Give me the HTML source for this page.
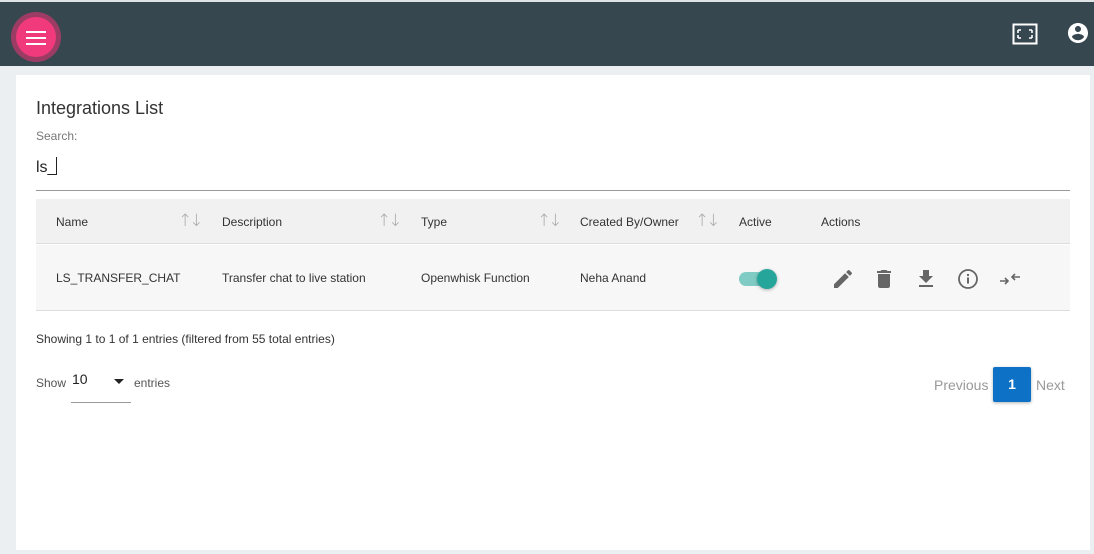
<!DOCTYPE html>
<html><head><style>
*{margin:0;padding:0;box-sizing:border-box}
body{width:1094px;height:554px;background:#eceff1;font-family:"Liberation Sans",sans-serif;position:relative;overflow:hidden;color:#333}
.top{position:absolute;left:0;top:0;width:1094px;height:2px;background:#dfe3e6}
.hdr{position:absolute;left:0;top:2px;width:1094px;height:64px;background:#37474f}
.fab{position:absolute;left:11px;top:10px;width:50px;height:50px;border-radius:50%;background:#9c3c64}
.fab i{position:absolute;left:5px;top:5px;width:40px;height:40px;border-radius:50%;background:#f03a7c}
.fab b{position:absolute;left:15px;width:20px;height:2px;background:#fff}
.card{position:absolute;left:16px;top:75px;width:1074px;height:475px;background:#fff}
.abs{position:absolute;white-space:nowrap}
.th{position:absolute;left:20px;top:124px;width:1034px;height:45px;background:#f1f1f1;border-bottom:1px solid #ddd}
.tr{position:absolute;left:20px;top:170px;width:1034px;height:66px;background:#f7f7f7;border-bottom:1px solid #ddd}
.t{position:absolute;font-size:12px;color:#333}
.s{position:absolute;font-size:17px;color:#aaa;letter-spacing:-3px;font-family:"DejaVu Sans",sans-serif;font-weight:200}
</style></head><body>
<div class="top"></div>
<div class="hdr">
<div class="fab"><i></i><b style="top:19px"></b><b style="top:25px"></b><b style="top:31px"></b></div>
<svg style="position:absolute;left:1012px;top:21px" width="26" height="22" viewBox="0 0 26 22"><rect x="1.5" y="1.5" width="23" height="19" fill="none" stroke="#fff" stroke-width="2"/><path d="M6 7h3M6 7v3M20 7h-3M20 7v3M6 15h3M6 15v-3M20 15h-3M20 15v-3" stroke="#fff" stroke-width="1.6"/></svg>
<svg style="position:absolute;left:1066px;top:19px" width="24" height="24" viewBox="0 0 24 24"><path fill="#fff" d="M12 2C6.48 2 2 6.48 2 12s4.48 10 10 10 10-4.48 10-10S17.52 2 12 2zm0 3c1.66 0 3 1.34 3 3s-1.34 3-3 3-3-1.34-3-3 1.34-3 3-3zm0 14.2c-2.5 0-4.710-1.28-6-3.22.03-1.99 4-3.08 6-3.08 1.99 0 5.970 1.09 6 3.08-1.29 1.94-3.5 3.22-6 3.22z"/></svg>
</div>
<div class="card">
<div class="abs" style="left:20px;top:23px;font-size:18px;color:#333">Integrations List</div>
<div class="abs" style="left:20px;top:54px;font-size:12px;color:#777">Search:</div>
<div class="abs" style="left:20px;top:82px;font-size:16px;color:#222">ls_<span style="display:inline-block;width:1px;height:18px;background:#222;vertical-align:-3px"></span></div>
<div class="abs" style="left:20px;top:115px;width:1034px;height:1px;background:#999"></div>
<div class="th">
<div class="t" style="left:20px;top:16px">Name</div><div class="s" style="left:142px;top:12px">↑↓</div>
<div class="t" style="left:186px;top:16px">Description</div><div class="s" style="left:341px;top:12px">↑↓</div>
<div class="t" style="left:385px;top:16px">Type</div><div class="s" style="left:501px;top:12px">↑↓</div>
<div class="t" style="left:544px;top:16px">Created By/Owner</div><div class="s" style="left:659px;top:12px">↑↓</div>
<div class="t" style="left:703px;top:16px">Active</div>
<div class="t" style="left:785px;top:16px">Actions</div>
</div>
<div class="tr">
<div class="t" style="left:20px;top:26px">LS_TRANSFER_CHAT</div>
<div class="t" style="left:186px;top:26px">Transfer chat to live station</div>
<div class="t" style="left:385px;top:26px">Openwhisk Function</div>
<div class="t" style="left:544px;top:26px">Neha Anand</div>
<div style="position:absolute;left:703px;top:27px;width:34px;height:14px;border-radius:7px;background:#80cbc4"></div>
<div style="position:absolute;left:721px;top:24px;width:20px;height:20px;border-radius:50%;background:#26a69a;box-shadow:0 1px 3px rgba(0,0,0,.3)"></div>
<svg style="position:absolute;left:795px;top:22px" width="24" height="24" viewBox="0 0 24 24"><path fill="#666" d="M3 17.25V21h3.75L17.81 9.94l-3.75-3.75L3 17.25zM20.71 7.04a1 1 0 000-1.41l-2.34-2.34a1 1 0 00-1.41 0l-1.830 1.83 3.75 3.75 1.83-1.83z"/></svg>
<svg style="position:absolute;left:836px;top:22px" width="24" height="24" viewBox="0 0 24 24"><path fill="#666" d="M6 19c0 1.1.9 2 2 2h8c1.1 0 2-.9 2-2V7H6v12zM19 4h-3.5l-1-1h-5l-1 1H5v2h14V4z"/></svg>
<svg style="position:absolute;left:878px;top:22px" width="24" height="24" viewBox="0 0 24 24"><path fill="#666" d="M19 9h-4V3H9v6H5l7 7 7-7zM5 18v2h14v-2H5z"/></svg>
<svg style="position:absolute;left:920px;top:22px" width="24" height="24" viewBox="0 0 24 24"><circle cx="12" cy="12" r="9" fill="none" stroke="#666" stroke-width="1.8"/><rect x="11" y="10.5" width="2" height="6" fill="#666"/><rect x="11" y="7" width="2" height="2" fill="#666"/></svg>
<svg style="position:absolute;left:962px;top:22px" width="24" height="24" viewBox="0 0 24 24"><path fill="none" stroke="#666" stroke-width="1.6" d="M2 14h8M7 11l3 3-3 3M22 10h-8M17 7l-3 3 3 3"/></svg>
</div>
<div class="abs" style="left:20px;top:257px;font-size:12px;color:#333">Showing 1 to 1 of 1 entries (filtered from 55 total entries)</div>
<div class="abs" style="left:20px;top:301px;font-size:12px;color:#555">Show</div>
<div class="abs" style="left:56px;top:296px;font-size:14px;color:#222">10</div>
<div style="position:absolute;left:98px;top:304px;width:0;height:0;border-left:5px solid transparent;border-right:5px solid transparent;border-top:5px solid #222"></div>
<div class="abs" style="left:55px;top:327px;width:60px;height:1px;background:#999"></div>
<div class="abs" style="left:118px;top:301px;font-size:12px;color:#555">entries</div>
<div class="abs" style="left:918px;top:302px;font-size:14px;color:#999">Previous</div>
<div style="position:absolute;left:977px;top:292px;width:38px;height:35px;background:#0d72c6;border-radius:2px;box-shadow:0 1px 3px rgba(0,0,0,.3);color:#fff;font-size:14px;font-weight:bold;text-align:center;line-height:35px">1</div>
<div class="abs" style="left:1020px;top:302px;font-size:14px;color:#999">Next</div>
</div>
</body></html>
